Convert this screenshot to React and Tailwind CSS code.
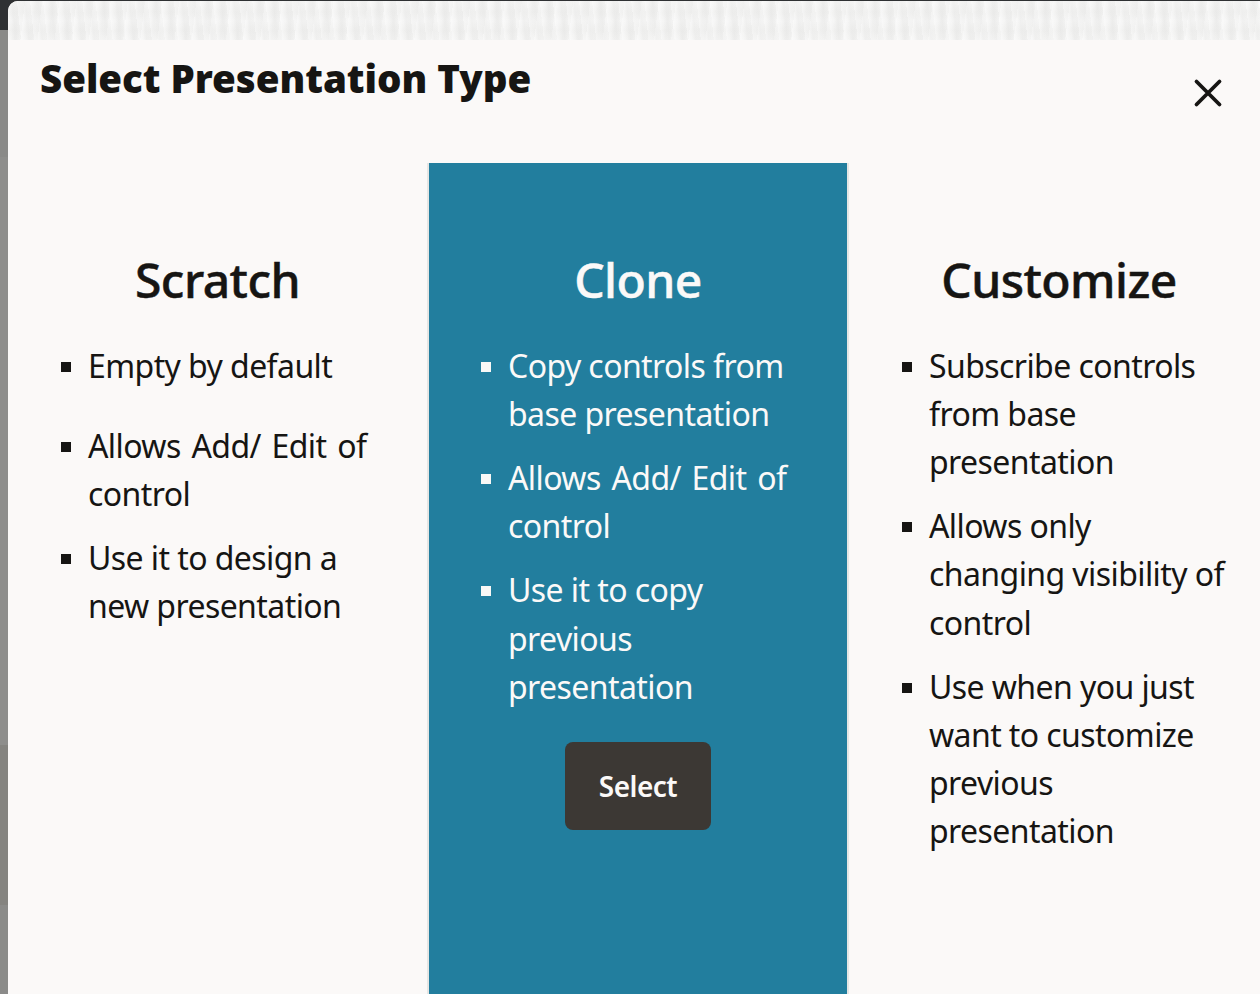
import React from "react";

const font = { fontFamily: '"Noto Sans", "Open Sans", sans-serif' };

function Bullet({ children, extra, light, wide }) {
  return (
    <li className={`flex items-start ${extra ? "mb-[32px]" : "mb-[16px]"}`}>
      <span className={`mt-[20px] mr-[17px] h-[10px] w-[10px] shrink-0 ${light ? "bg-[#f9f8f6]" : "bg-[#161513]"}`} />
      <span className={wide ? "[word-spacing:3px]" : ""}>{children}</span>
    </li>
  );
}

function Column({ title, items, width, pad, blue, firstExtra, children }) {
  return (
    <section
      className={`${width} shrink-0 pt-[86px] ${blue ? "border-x-2 border-x-[#e6e6e4] bg-[#227e9e] text-[#fbf9f8]" : "text-[#161513]"}`}
    >
      <h2 className="m-0 text-center text-[48px] leading-[62px] font-medium tracking-[-0.55px] [-webkit-text-stroke:0.5px_currentColor]">{title}</h2>
      <ul className={`${pad} mt-[30.5px] list-none text-[32px] leading-[48.2px] tracking-[-0.58px]`}>
        {items.map((t, i) => (
          <Bullet key={t} light={blue} wide={t.startsWith("Allows Add")} extra={firstExtra && i === 0}>{t}</Bullet>
        ))}
      </ul>
      {children}
    </section>
  );
}

export default function App() {
  return (
    <div style={font} className="flex h-[994px] w-[1260px] overflow-hidden bg-[#8b8b89]">
      <div className="flex w-[8px] shrink-0 flex-col">
        <div className="h-[30px] bg-[#2f3133]" />
        <div className="h-[127px] bg-[#8a8a88]" />
        <div className="h-[588px] bg-[#8e8e8c]" />
        <div className="h-[160px] bg-[#858480]" />
        <div className="flex-1 bg-[#8b8b89]" />
      </div>
      <div className="flex min-w-0 flex-1 flex-col bg-[#2f3133] pt-px">
        <main className="flex min-h-0 flex-1 flex-col overflow-hidden rounded-tl-[10px] bg-[#fbf9f8]">
          <div className="h-[39px] shrink-0 bg-[#f1f1f0] bg-[repeating-linear-gradient(84deg,rgba(255,255,255,0.35)_0px,rgba(255,255,255,0)_5px,rgba(228,228,227,0.3)_8px,rgba(255,255,255,0)_13px),repeating-linear-gradient(97deg,rgba(255,255,255,0.35)_0px,rgba(255,255,255,0)_7px,rgba(230,230,229,0.3)_11px,rgba(255,255,255,0)_17px),repeating-linear-gradient(0deg,rgba(255,255,255,0.25)_0px,rgba(232,232,231,0.2)_9px,rgba(255,255,255,0.25)_19px)]" />
          <header className="flex h-[123px] shrink-0 items-start justify-between pl-[32px] pr-[36px]">
            <h1 className="m-0 mt-[11px] text-[38.5px] leading-[54px] font-black tracking-[-0.03px] text-[#161513]">
              Select Presentation Type
            </h1>
            <svg className="mt-[37px]" width="32" height="32" viewBox="0 0 32 32" fill="none" stroke="#161513" strokeWidth="3.8" strokeLinecap="round">
              <path d="M4.5 4.5 L27.5 27.5 M27.5 4.5 L4.5 27.5" />
            </svg>
          </header>
          <div className="flex min-h-0 flex-1">
            <Column title="Scratch" width="w-[419px]" pad="pl-[53px] pr-[30px]" firstExtra
              items={["Empty by default", "Allows Add/ Edit of control", "Use it to design a new presentation"]} />
            <Column title="Clone" width="w-[422px]" pad="pl-[52px] pr-[40px]" blue
              items={["Copy controls from base presentation", "Allows Add/ Edit of control", "Use it to copy previous presentation"]}>
              <div className="mt-[31.5px] flex justify-center">
                <button className="h-[88px] w-[146px] rounded-[8px] bg-[#3c3834] text-[28px] font-semibold tracking-[-0.5px] text-[#fbf9f8]">
                  Select
                </button>
              </div>
            </Column>
            <Column title="Customize" width="w-[420px]" pad="pl-[53px] pr-[38px]"
              items={["Subscribe controls from base presentation", "Allows only changing visibility of control", "Use when you just want to customize previous presentation"]} />
          </div>
        </main>
      </div>
    </div>
  );
}
